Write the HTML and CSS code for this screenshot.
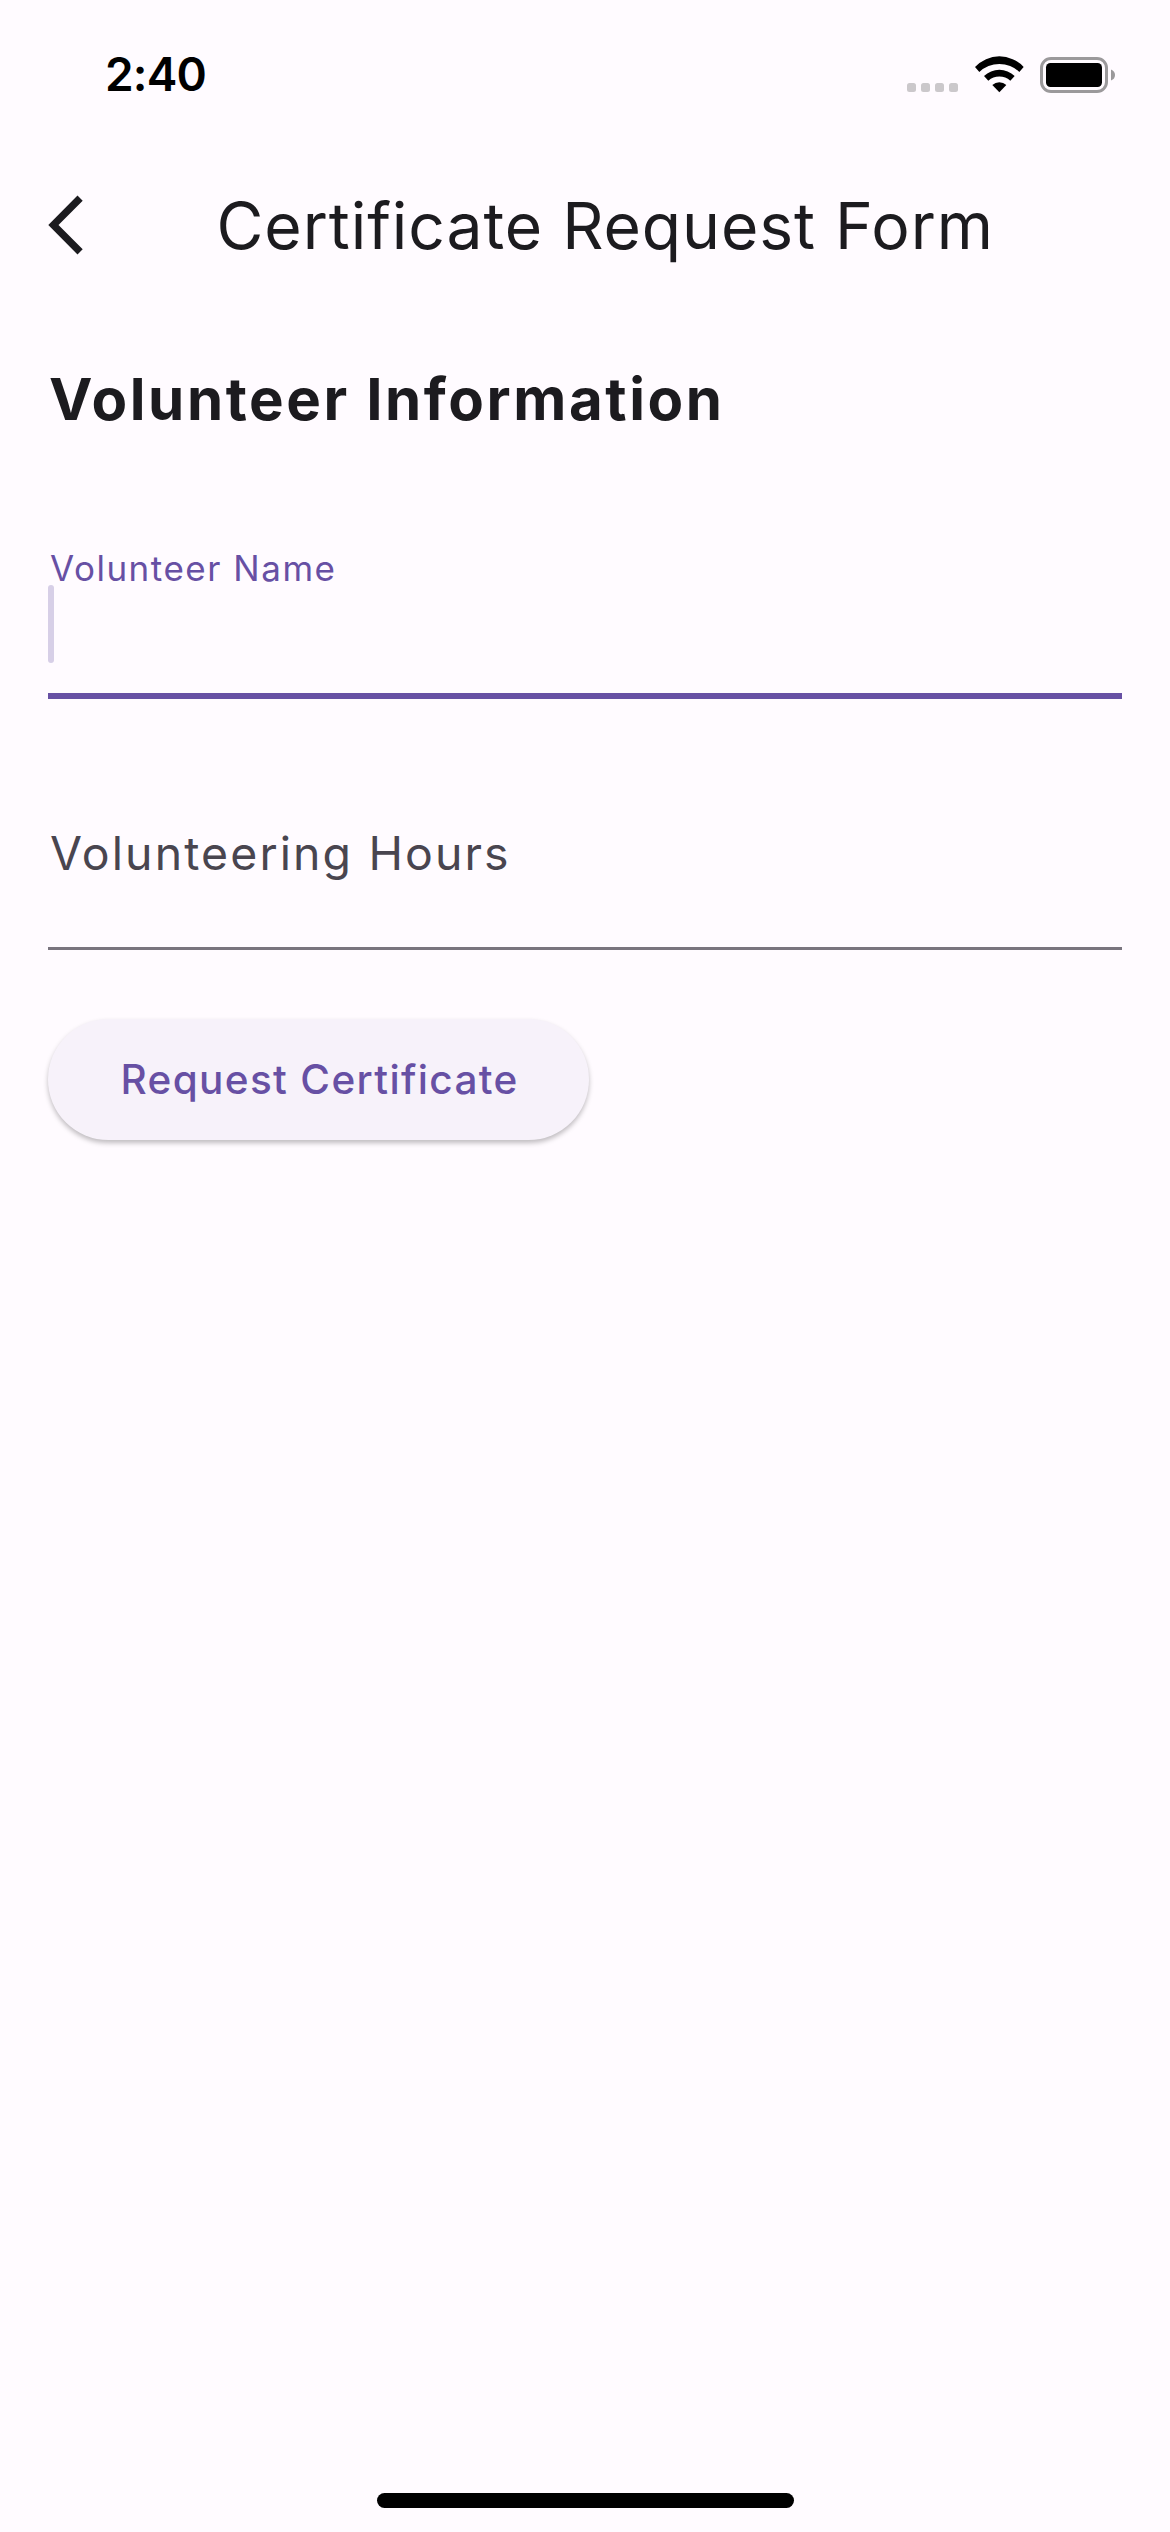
FILE: index.html
```html
<!DOCTYPE html>
<html lang="en">
<head>
<meta charset="utf-8">
<title>Certificate Request Form</title>
<link rel="stylesheet" href="styles.css">
</head>
<body>
<div class="screen">
  <header class="status">
    <span class="time">2:40</span>
    <div class="indicators">
      <div class="cellular"><i></i><i></i><i></i><i></i></div>
      <svg class="wifi" viewBox="0 0 147 110" aria-hidden="true">
        <path d="M0 33A99.3 99.3 0 0 1 146 33L133 48A86 86 0 0 0 13 48Z"/>
        <path d="M27 60A66 66 0 0 1 119 60L106 74A50 50 0 0 0 40 74Z"/>
        <path d="M52 87A30 30 0 0 1 94 87L73 109Z"/>
      </svg>
      <svg class="battery" viewBox="0 0 76 36" aria-hidden="true">
        <rect x="1.5" y="1.5" width="65" height="33" rx="9.5" fill="none" stroke="#9b999b" stroke-width="3"/>
        <rect x="6" y="6" width="56" height="24" rx="4.5"/>
        <path d="M71 12.5Q75 14 75 18T71 23.5Z" fill="#9b999b"/>
      </svg>
    </div>
  </header>
  <nav class="appbar">
    <svg class="back" viewBox="0 0 36 60" aria-label="Back"><path d="M29.5 .5L34.7 5.7L10.5 30L34.7 54.3L29.5 59.5L.3 30Z"/></svg>
    <h1 class="title">Certificate Request Form</h1>
  </nav>
  <main class="content">
    <h2 class="section">Volunteer Information</h2>
    <div class="field focused">
      <label class="label">Volunteer Name</label>
      <div class="caret"></div>
    </div>
    <div class="field">
      <label class="label">Volunteering Hours</label>
    </div>
    <button class="submit">Request Certificate</button>
  </main>
  <div class="home"></div>
</div>
</body>
</html>
```
FILE: styles.css
```css
* { box-sizing: border-box; margin: 0; padding: 0; }

body {
  background: #fffbff;
  color: #1c1b1f;
  font-family: Inter, sans-serif;
}

.screen {
  display: flex;
  flex-direction: column;
  width: 1170px;
  height: 2532px;
  overflow: hidden;
}

.status {
  display: flex;
  justify-content: space-between;
  align-items: center;
  height: 141px;
  padding: 7px 54px 0 105px;
}

.time {
  color: #000;
  font-size: 46px;
  font-weight: 600;
  letter-spacing: -.8px;
  line-height: 56px;
}

.indicators { display: flex; align-items: flex-end; height: 37px; }

.cellular { display: flex; gap: 5px; padding-bottom: 1px; }
.cellular i { width: 9px; height: 9px; border-radius: 2.5px; background: #cbc8cb; }

.wifi { width: 49px; height: 36.7px; margin: 0 16.3px 0 16.7px; }
.battery { width: 76px; height: 36px; }

.appbar { display: flex; align-items: center; height: 168px; padding-left: 48px; }
.back { width: 36px; height: 60px; fill: #1c1b1f; }

.title {
  margin-left: 132.5px;
  padding-top: 2px;
  font-size: 64.2px;
  font-weight: 400;
  letter-spacing: .93px;
  line-height: 84px;
  white-space: nowrap;
}

.content {
  display: flex;
  flex: 1;
  flex-direction: column;
  align-items: flex-start;
  padding: 48px 48px 0;
}

.section {
  padding-left: 1px;
  font-size: 58.2px;
  font-weight: 700;
  letter-spacing: 2.58px;
  line-height: 84px;
  white-space: nowrap;
}

.field {
  width: 100%;
  height: 251px;
  padding-top: 124px;
  border-bottom: 3px solid #79747e;
}

.label {
  display: block;
  padding-left: 2px;
  color: #49454f;
  font-size: 46.4px;
  letter-spacing: 2.13px;
  line-height: 60px;
}

.focused { height: 258px; padding-top: 110px; border-bottom: 6px solid #6750a4; }
.focused .label { color: #6750a4; font-size: 35px; letter-spacing: 1.52px; line-height: 34px; }

.caret { width: 6px; height: 78px; border-radius: 3px; background: #d7cfe7; }

.submit {
  width: 541px;
  height: 121px;
  margin-top: 69px;
  padding: 1px 0 0 72.5px;
  border: 0;
  border-radius: 61px;
  background: #f7f2fa;
  box-shadow: 0 3px 5px rgba(0, 0, 0, .25);
  color: #6750a4;
  font: 500 40.5px/56px Inter, sans-serif;
  letter-spacing: 1.35px;
  text-align: left;
}

.home {
  width: 417px;
  height: 15px;
  margin: 0 auto 24px 377px;
  border-radius: 8px;
  background: #000;
}
```
